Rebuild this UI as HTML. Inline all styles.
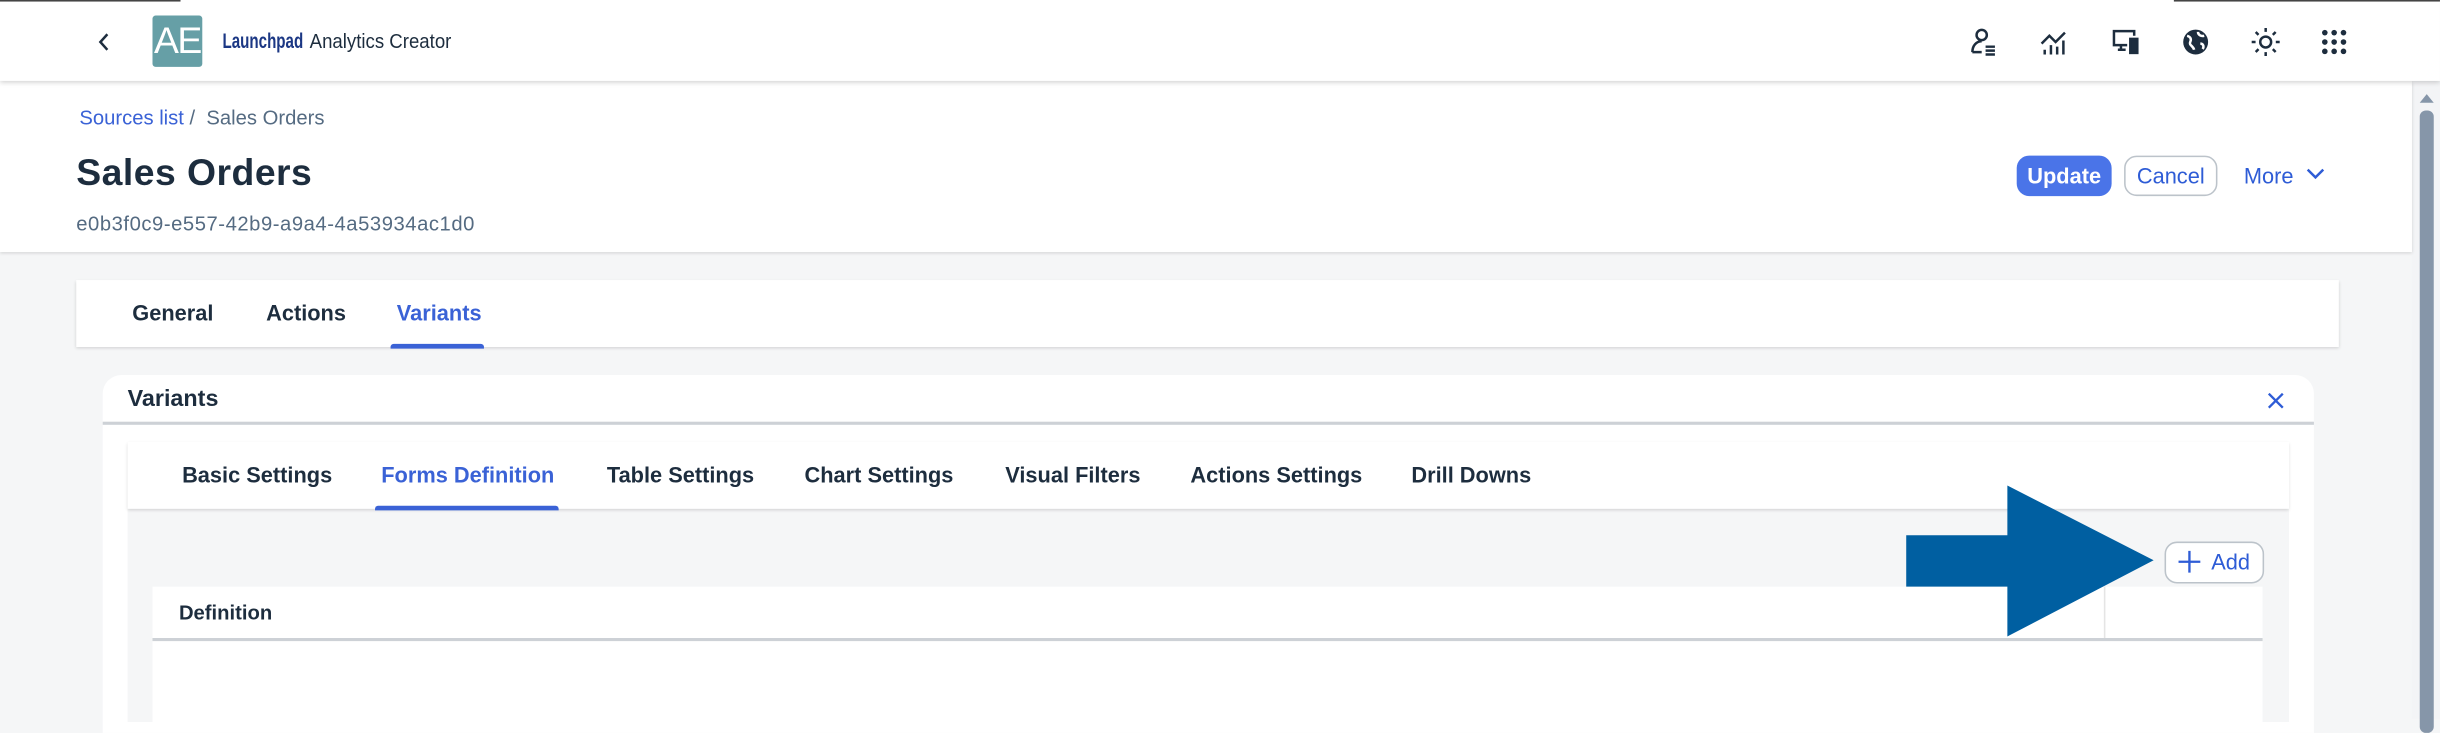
<!DOCTYPE html>
<html><head><meta charset="utf-8"><style>
html,body{margin:0;padding:0;width:2440px;height:718px;overflow:hidden;background:#f5f6f7;}
#w{position:absolute;left:0;top:0;width:1568px;height:462px;transform:scale(1.5561);transform-origin:0 0;font-family:"Liberation Sans",sans-serif;color:#1d2d3e;}
.a{position:absolute;}
.t{position:absolute;white-space:nowrap;line-height:1;}
svg{position:absolute;overflow:visible}
</style></head><body><div id="w">
<div class="a" style="left:0;top:0;width:1568px;height:52px;background:#fff;box-shadow:0 1px 3px rgba(0,0,0,.18);z-index:3"></div>
<div class="a" style="left:0;top:0;width:116px;height:1px;background:#444;z-index:4"></div>
<div class="a" style="left:1397px;top:0;width:171px;height:1px;background:#444;z-index:4"></div>
<div style="position:absolute;left:0;top:0;z-index:5;width:1568px;height:52px">
<svg style="left:63px;top:21px" width="8" height="12"><path d="M6 1L1.5 6L6 11" fill="none" stroke="#1d2d3e" stroke-width="1.6"/></svg>
<div class="a" style="left:98px;top:10px;width:32px;height:33px;background:#669fa6;border-radius:2px;color:#fff;font-size:24px;line-height:33px;text-align:center;letter-spacing:-1px;font-weight:300">AE</div>
<div class="t" style="left:143px;top:20px;font-size:13.5px;font-weight:bold;color:#1b3784;transform:scaleX(0.72);transform-origin:0 0">Launchpad</div>
<div class="t" style="left:199px;top:20px;font-size:13px;color:#1d2d3e;transform:scaleX(0.92);transform-origin:0 0">Analytics Creator</div>
<svg style="left:1266px;top:18px" width="18" height="18" fill="none" stroke="#1d2d3e" stroke-width="1.6"><circle cx="7.5" cy="4.5" r="3.3"/><path d="M1.5 15.5c0-4 2.5-7 6-7M1.5 15.5h6"/><path d="M10 12h6M10 14.5h6M10 17h6" /></svg>
<svg style="left:1311px;top:18px" width="18" height="18" fill="none" stroke="#1d2d3e" stroke-width="1.6"><path d="M1 10l5-5 4 4 6-6"/><path d="M3 14v3M7 11v6M11 12v5M15 8v9"/></svg>
<svg style="left:1357px;top:18px" width="18" height="18" fill="none" stroke="#1d2d3e" stroke-width="1.6"><path d="M10 11H1.5V2h13v3"/><path d="M6 11v3M4 14h5"/><rect x="12" y="7" width="4.5" height="9" fill="#1d2d3e"/></svg>
<svg style="left:1402px;top:18px" width="18" height="18"><circle cx="9" cy="9" r="8" fill="#1d2d3e"/><path d="M3.5 5c2 .5 3 2 2 4s2 2.5 2.5 5 M10.5 2.5c0 2 2 3 4 2.5 M12 10c2 0 2.5 2 1.5 3.5" stroke="#fff" stroke-width="1.6" fill="none"/></svg>
<svg style="left:1447px;top:18px" width="18" height="18" fill="none" stroke="#1d2d3e" stroke-width="1.6"><circle cx="9" cy="9" r="3.5"/><path d="M9 0v2.5M9 15.5V18M0 9h2.5M15.5 9H18M2.6 2.6l1.8 1.8M13.6 13.6l1.8 1.8M2.6 15.4l1.8-1.8M13.6 4.4l1.8-1.8"/></svg>
<svg style="left:1492px;top:19px" width="16" height="16" fill="#1d2d3e"><circle cx="2" cy="2" r="1.8"/><circle cx="8" cy="2" r="1.8"/><circle cx="14" cy="2" r="1.8"/><circle cx="2" cy="8" r="1.8"/><circle cx="8" cy="8" r="1.8"/><circle cx="14" cy="8" r="1.8"/><circle cx="2" cy="14" r="1.8"/><circle cx="8" cy="14" r="1.8"/><circle cx="14" cy="14" r="1.8"/></svg>
</div>
<div class="a" style="left:0;top:52px;width:1550px;height:110px;background:#fff;box-shadow:0 1px 2px rgba(0,0,0,.15);z-index:2"></div>
<div style="position:absolute;left:0;top:0;z-index:3">
<div class="t" style="left:51px;top:69px;font-size:13px;color:#3a62d6">Sources list <span style="color:#556b82">/&nbsp; Sales Orders</span></div>
<div class="t" style="left:49px;top:100px;font-size:24px;font-weight:bold;color:#1d2d3e;letter-spacing:0.3px">Sales Orders</div>
<div class="t" style="left:49px;top:137px;font-size:13px;color:#556b82;letter-spacing:0.35px">e0b3f0c9-e557-42b9-a9a4-4a53934ac1d0</div>
<div class="a" style="left:1296px;top:100px;width:61px;height:26px;background:#4a74e8;border-radius:8px;color:#fff;font-size:14px;font-weight:bold;text-align:center;line-height:26px">Update</div>
<div class="a" style="left:1365px;top:100px;width:58px;height:24px;border:1px solid #bcc3ca;background:#fff;border-radius:8px;color:#2e5cd6;font-size:14px;text-align:center;line-height:24px">Cancel</div>
<div class="t" style="left:1442px;top:106px;font-size:14px;color:#2e5cd6">More</div>
<svg style="left:1482px;top:108px" width="12" height="8"><path d="M1 1l5 5 5-5" fill="none" stroke="#2e5cd6" stroke-width="1.6"/></svg>
</div>
<div class="a" style="left:1550px;top:52px;width:18px;height:410px;background:#f3f4f6"></div>
<svg style="left:1555px;top:59px" width="9" height="7"><path d="M0 7L4.5 1.5L9 7z" fill="#8696a9"/></svg>
<div class="a" style="left:1555px;top:71px;width:9px;height:400px;background:#8696a9;border-radius:4px"></div>
<div class="a" style="left:49px;top:180px;width:1454px;height:43px;background:#fff;box-shadow:0 1px 2px rgba(0,0,0,.15)"></div>
<div class="t" style="left:85px;top:194px;font-size:14px;font-weight:bold">General</div>
<div class="t" style="left:171px;top:194px;font-size:14px;font-weight:bold">Actions</div>
<div class="t" style="left:255px;top:194px;font-size:14px;font-weight:bold;color:#3a62d6">Variants</div>
<div class="a" style="left:251px;top:221px;width:60px;height:3px;background:#3a62d6;border-radius:2px 2px 0 0"></div>
<div class="a" style="left:66px;top:241px;width:1421px;height:230px;background:#fff;border-radius:12px 12px 0 0"></div>
<div class="t" style="left:82px;top:249px;font-size:15px;font-weight:bold">Variants</div>
<svg style="left:1457px;top:252px" width="11" height="11"><path d="M1 1l9 9M10 1l-9 9" stroke="#2e5cd6" stroke-width="1.5"/></svg>
<div class="a" style="left:66px;top:271px;width:1421px;height:2px;background:#cdd1d6"></div>
<div class="a" style="left:82px;top:284px;width:1389px;height:180px;background:#f5f6f7"></div>
<div class="a" style="left:82px;top:284px;width:1389px;height:43px;background:#fff;box-shadow:0 1px 2px rgba(0,0,0,.15)"></div>
<div class="t" style="left:117px;top:298px;font-size:14px;font-weight:bold">Basic Settings</div>
<div class="t" style="left:245px;top:298px;font-size:14px;font-weight:bold;color:#3a62d6">Forms Definition</div>
<div class="a" style="left:241px;top:325px;width:118px;height:3px;background:#3a62d6;border-radius:2px 2px 0 0"></div>
<div class="t" style="left:390px;top:298px;font-size:14px;font-weight:bold">Table Settings</div>
<div class="t" style="left:517px;top:298px;font-size:14px;font-weight:bold">Chart Settings</div>
<div class="t" style="left:646px;top:298px;font-size:14px;font-weight:bold">Visual Filters</div>
<div class="t" style="left:765px;top:298px;font-size:14px;font-weight:bold">Actions Settings</div>
<div class="t" style="left:907px;top:298px;font-size:14px;font-weight:bold">Drill Downs</div>
<div class="a" style="left:98px;top:377px;width:1356px;height:90px;background:#fff"></div>
<div class="a" style="left:98px;top:410px;width:1356px;height:2px;background:#cdd1d6"></div>
<div class="a" style="left:1352px;top:377px;width:1px;height:33px;background:#e5e5e5"></div>
<div class="t" style="left:115px;top:387px;font-size:13px;font-weight:bold">Definition</div>
<div class="a" style="left:1391px;top:348px;width:62px;height:25px;border:1px solid #bcc3ca;background:#fff;border-radius:8px"></div>
<svg style="left:1399px;top:353px" width="16" height="16"><path d="M8 1v14M1 8h14" stroke="#2e5cd6" stroke-width="1.5"/></svg>
<div class="t" style="left:1421px;top:354px;font-size:14px;color:#2e5cd6">Add</div>
<svg style="left:0;top:0" width="1568" height="462"><path d="M1225 344H1290V312L1384 360L1290 409V377H1225Z" fill="#005fa1"/></svg>
</div></body></html>
